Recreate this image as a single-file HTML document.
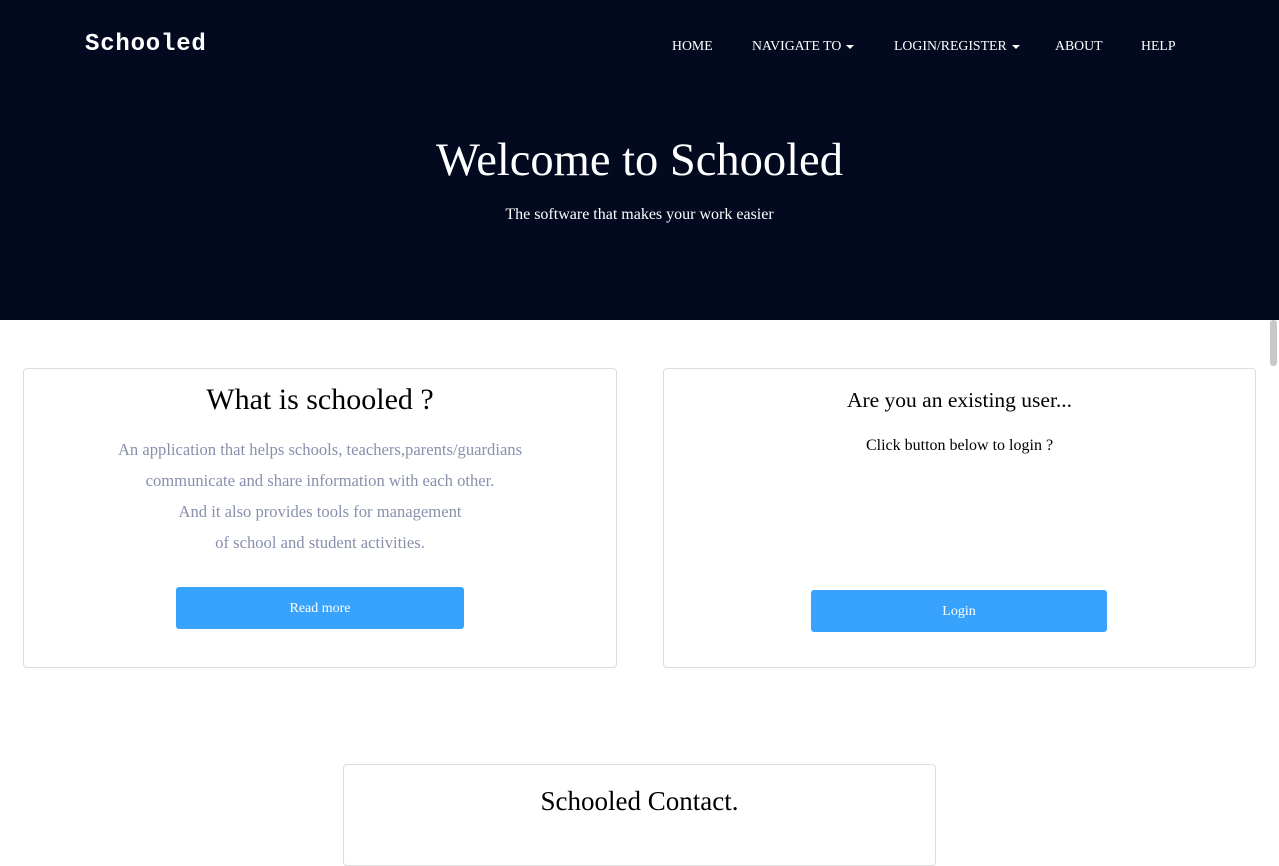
<!DOCTYPE html>
<html><head><style>
body{margin:0;width:1279px;height:812px;overflow:hidden;background:#fff;font-family:"Liberation Serif",serif;position:relative}
.hero{position:absolute;left:0;top:0;width:1279px;height:320px;background:#030a1f;color:#fff}
.logo{position:absolute;left:85px;top:31px;font:bold 24px "Liberation Mono",monospace;letter-spacing:0.8px}
.nav{position:absolute;top:38px;font-size:13.8px;white-space:nowrap}
.caret{display:inline-block;width:0;height:0;border-left:4px solid transparent;border-right:4px solid transparent;border-top:4px solid #fff;vertical-align:middle;margin-left:5px}
h1{position:absolute;left:0;width:1279px;top:134px;margin:0;text-align:center;font-weight:normal;font-size:46.5px}
.sub{position:absolute;left:0;width:1279px;top:206px;text-align:center;font-size:16px}
.card{position:absolute;border:1px solid #ddd;border-radius:4px;background:#fff;text-align:center}
.btn{position:absolute;background:#38a3fc;color:#fff;border-radius:3px;font-size:14px;text-align:center}
.gray{color:#8990ad;font-size:16.6px;line-height:31px}
.sb{position:absolute;left:1270px;top:320px;width:7px;height:46px;background:#c8c8c8;border-radius:3px}
</style></head><body>
<div class="hero">
<div class="logo">Schooled</div>
<div class="nav" style="left:672px">HOME</div>
<div class="nav" style="left:752px">NAVIGATE TO<span class="caret"></span></div>
<div class="nav" style="left:894px">LOGIN/REGISTER<span class="caret"></span></div>
<div class="nav" style="left:1055px">ABOUT</div>
<div class="nav" style="left:1141px">HELP</div>
<h1>Welcome to Schooled</h1>
<div class="sub">The software that makes your work easier</div>
</div>
<div class="sb"></div>
<div class="card" style="left:23px;top:368px;width:592px;height:298px">
<div style="position:absolute;top:14px;width:100%;font-size:30px">What is schooled ?</div>
<div class="gray" style="position:absolute;top:65px;width:100%">An application that helps schools, teachers,parents/guardians<br>communicate and share information with each other.<br>And it also provides tools for management<br>of school and student activities.</div>
<div class="btn" style="left:152px;top:218px;width:288px;height:42px;line-height:44px">Read more</div>
</div>
<div class="card" style="left:663px;top:368px;width:591px;height:298px">
<div style="position:absolute;top:19px;width:100%;font-size:21.5px">Are you an existing user...</div>
<div style="position:absolute;top:68px;width:100%;font-size:16px">Click button below to login ?</div>
<div class="btn" style="left:147px;top:221px;width:296px;height:42px;line-height:44px">Login</div>
</div>
<div class="card" style="left:343px;top:764px;width:591px;height:100px">
<div style="position:absolute;top:21px;width:100%;font-size:27px">Schooled Contact.</div>
</div>
</body></html>
